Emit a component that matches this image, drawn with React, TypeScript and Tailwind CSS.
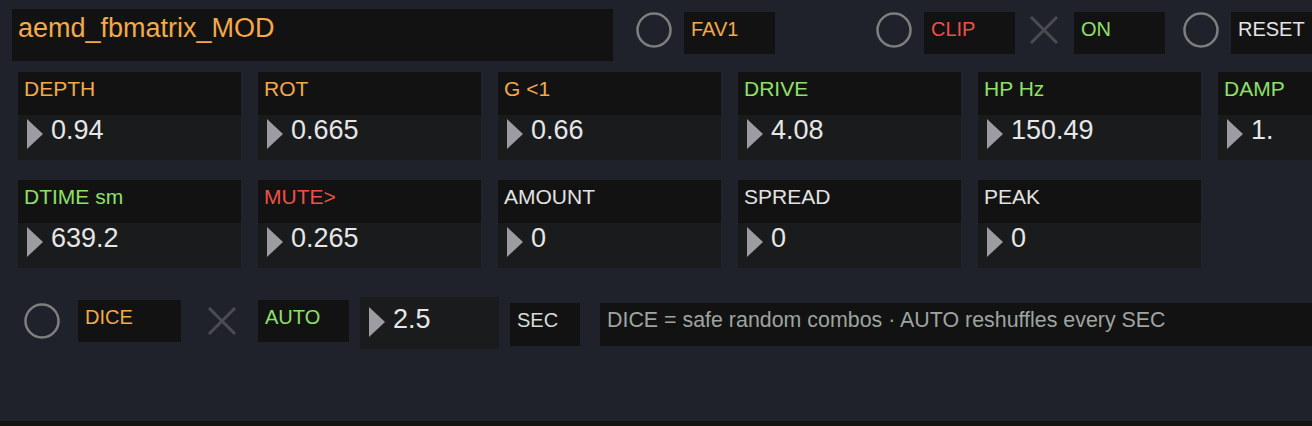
import React from "react";

const ORANGE = "text-[#f4a94b]";
const GREEN = "text-[#8ee068]";
const RED = "text-[#ee5046]";
const WHITE = "text-[#e2e2e2]";

type Param = { label: string; value: string; color: string };

const ROW1: Param[] = [
  { label: "DEPTH", value: "0.94", color: ORANGE },
  { label: "ROT", value: "0.665", color: ORANGE },
  { label: "G <1", value: "0.66", color: ORANGE },
  { label: "DRIVE", value: "4.08", color: GREEN },
  { label: "HP Hz", value: "150.49", color: GREEN },
  { label: "DAMP", value: "1.", color: GREEN },
];

const ROW2: Param[] = [
  { label: "DTIME sm", value: "639.2", color: GREEN },
  { label: "MUTE>", value: "0.265", color: RED },
  { label: "AMOUNT", value: "0", color: WHITE },
  { label: "SPREAD", value: "0", color: WHITE },
  { label: "PEAK", value: "0", color: WHITE },
];

function Ring() {
  return (
    <svg width="36" height="36" viewBox="0 0 36 36" className="shrink-0">
      <circle cx="18" cy="18" r="16.5" fill="none" stroke="#7e7e7e" strokeWidth="2.5" />
    </svg>
  );
}

function Cross() {
  return (
    <svg width="30" height="30" viewBox="0 0 30 30" className="shrink-0">
      <path d="M2 2 L28 28 M28 2 L2 28" stroke="#4b4b50" strokeWidth="3" />
    </svg>
  );
}

function Arrow() {
  return (
    <svg width="16" height="30" viewBox="0 0 16 30" className="shrink-0">
      <polygon points="0,0 16,15 0,30" fill="#9c9ca2" />
    </svg>
  );
}

function Toggle({ label, color, w = "w-[91px]" }: { label: string; color: string; w?: string }) {
  return (
    <div className={`${w} h-[42px] shrink-0 bg-[#121212] pl-[7px] pt-[7px] text-[20px] leading-none ${color}`}>
      {label}
    </div>
  );
}

function ParamBox({ p }: { p: Param }) {
  return (
    <div className="w-[223px] h-[88px] shrink-0 flex flex-col">
      <div className={`h-[43px] bg-[#121212] pl-[6px] pt-[6px] text-[21px] leading-none ${p.color}`}>
        {p.label}
      </div>
      <div className="flex-1 bg-[#1a1b1d] flex items-start pl-[9px] pt-[4px]">
        <Arrow />
        <span className="ml-[8px] -mt-[2px] text-[27px] leading-none text-[#e6e6e6]">{p.value}</span>
      </div>
    </div>
  );
}

export default function App() {
  return (
    <div
      className="w-[1312px] h-[426px] bg-[#1f222a] overflow-hidden flex flex-col"
      style={{ fontFamily: '"Liberation Sans", Arial, sans-serif' }}
    >
      {/* header row */}
      <div className="flex items-start pt-[9px] pl-[12px]">
        <div className={`w-[601px] h-[52px] shrink-0 bg-[#121212] pl-[6px] pt-[6px] text-[27px] leading-none ${ORANGE}`}>
          aemd_fbmatrix_MOD
        </div>
        <div className="ml-[23px] mt-[3px] flex items-start gap-[12px]">
          <Ring />
          <Toggle label="FAV1" color={ORANGE} />
        </div>
        <div className="ml-[101px] mt-[3px] flex items-start gap-[12px]">
          <Ring />
          <Toggle label="CLIP" color={RED} />
        </div>
        <div className="ml-[14px] mt-[6px]">
          <Cross />
        </div>
        <div className="ml-[15px] mt-[3px]">
          <Toggle label="ON" color={GREEN} />
        </div>
        <div className="ml-[18px] mt-[3px] flex items-start gap-[12px]">
          <Ring />
          <Toggle label="RESET" color="text-[#e4e4e4]" />
        </div>
      </div>

      {/* parameter rows */}
      <div className="flex gap-[17px] pl-[18px] mt-[11px]">
        {ROW1.map((p) => (
          <ParamBox key={p.label} p={p} />
        ))}
      </div>
      <div className="flex gap-[17px] pl-[18px] mt-[20px]">
        {ROW2.map((p) => (
          <ParamBox key={p.label} p={p} />
        ))}
      </div>

      {/* dice row */}
      <div className="flex items-start pl-[24px] mt-[29px]">
        <div className="mt-[6px]">
          <Ring />
        </div>
        <div className="ml-[18px] mt-[3px]">
          <Toggle label="DICE" color={ORANGE} w="w-[103px]" />
        </div>
        <div className="ml-[26px] mt-[9px]">
          <Cross />
        </div>
        <div className="ml-[21px] mt-[3px]">
          <Toggle label="AUTO" color={GREEN} />
        </div>
        <div className="ml-[11px] w-[139px] h-[52px] shrink-0 bg-[#1a1b1d] flex items-start pl-[9px] pt-[10px]">
          <Arrow />
          <span className="ml-[8px] -mt-[1px] text-[27px] leading-none text-[#e6e6e6]">2.5</span>
        </div>
        <div className="ml-[11px] mt-[6px] w-[70px] h-[43px] shrink-0 bg-[#121212] pl-[7px] pt-[7px] text-[20px] leading-none text-[#d6dcd4]">
          SEC
        </div>
        <div className="ml-[20px] mt-[6px] flex-1 h-[43px] bg-[#121212] pl-[7px] pt-[7px] text-[21.4px] leading-none text-[#9ea4a1] whitespace-nowrap">
          DICE = safe random combos · AUTO reshuffles every SEC
        </div>
      </div>

      <div className="flex-1" />
      <div className="h-[5px] bg-[#141414]" />
    </div>
  );
}
